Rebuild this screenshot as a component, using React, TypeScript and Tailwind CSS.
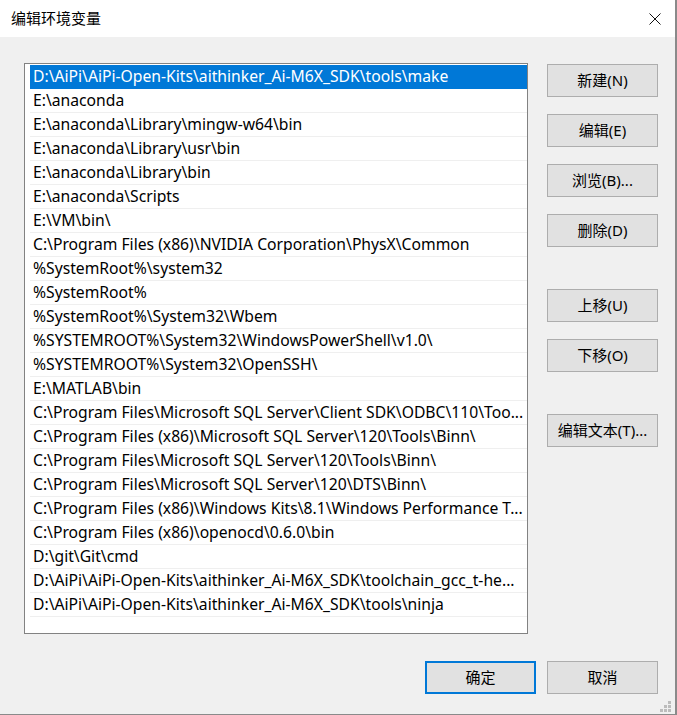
import React from "react";

const paths = [
  "D:\\AiPi\\AiPi-Open-Kits\\aithinker_Ai-M6X_SDK\\tools\\make",
  "E:\\anaconda",
  "E:\\anaconda\\Library\\mingw-w64\\bin",
  "E:\\anaconda\\Library\\usr\\bin",
  "E:\\anaconda\\Library\\bin",
  "E:\\anaconda\\Scripts",
  "E:\\VM\\bin\\",
  "C:\\Program Files (x86)\\NVIDIA Corporation\\PhysX\\Common",
  "%SystemRoot%\\system32",
  "%SystemRoot%",
  "%SystemRoot%\\System32\\Wbem",
  "%SYSTEMROOT%\\System32\\WindowsPowerShell\\v1.0\\",
  "%SYSTEMROOT%\\System32\\OpenSSH\\",
  "E:\\MATLAB\\bin",
  "C:\\Program Files\\Microsoft SQL Server\\Client SDK\\ODBC\\110\\Too...",
  "C:\\Program Files (x86)\\Microsoft SQL Server\\120\\Tools\\Binn\\",
  "C:\\Program Files\\Microsoft SQL Server\\120\\Tools\\Binn\\",
  "C:\\Program Files\\Microsoft SQL Server\\120\\DTS\\Binn\\",
  "C:\\Program Files (x86)\\Windows Kits\\8.1\\Windows Performance T...",
  "C:\\Program Files (x86)\\openocd\\0.6.0\\bin",
  "D:\\git\\Git\\cmd",
  "D:\\AiPi\\AiPi-Open-Kits\\aithinker_Ai-M6X_SDK\\toolchain_gcc_t-he...",
  "D:\\AiPi\\AiPi-Open-Kits\\aithinker_Ai-M6X_SDK\\tools\\ninja",
];

const font = "font-['Noto_Sans','Noto_Sans_CJK_SC',sans-serif]";

const Btn: React.FC<{ label: string; primary?: boolean; className?: string }> = ({
  label,
  primary = false,
  className = "",
}) => (
  <button
    type="button"
    className={`w-[111px] h-[33px] bg-[#e1e1e1] text-[15px] text-black flex items-center justify-center ${
      primary ? "border-2 border-[#0078d7]" : "border border-[#adadad]"
    } ${className}`}
  >
    {label}
  </button>
);

// resize grip dots, bottom right corner
const Grip = () => (
  <svg width="11" height="11" viewBox="0 0 11 11" className="absolute right-[4px] bottom-[2px]">
    <rect x="8" y="0" width="3" height="3" fill="#bcbcbc" />
    <rect x="4" y="4" width="3" height="3" fill="#bcbcbc" />
    <rect x="8" y="4" width="3" height="3" fill="#bcbcbc" />
    <rect x="0" y="8" width="3" height="3" fill="#bcbcbc" />
    <rect x="4" y="8" width="3" height="3" fill="#bcbcbc" />
    <rect x="8" y="8" width="3" height="3" fill="#bcbcbc" />
  </svg>
);

export default function App() {
  return (
    <div className={`relative w-[677px] h-[715px] flex flex-col bg-[#f0f0f0] border-r-2 border-b border-r-[#8a8a8a] border-b-[#8a8a8a] ${font}`}>
      {/* title bar */}
      <div className="h-[37px] bg-white flex items-center justify-between pl-[11px] pr-[14px]">
        <span className="text-[15px] text-black">编辑环境变量</span>
        <svg width="12" height="12" viewBox="0 0 12 12">
          <path d="M0.5 0.5 L11.5 11.5 M11.5 0.5 L0.5 11.5" stroke="#111" strokeWidth="1" />
        </svg>
      </div>

      <div className="flex pl-[24px] pt-[26px]">
        {/* path list */}
        <div className="w-[504px] h-[571px] bg-white border border-[#828282] pt-[1px] pl-[5px]">
          {paths.map((p, i) => (
            <div
              key={i}
              className={`h-[24px] border-b pl-[3px] pt-[1px] flex items-center whitespace-nowrap overflow-hidden text-[15.7px] ${
                i === 0 ? "bg-[#0078d7] border-b-[#0078d7] text-white" : "border-b-[#efefef] text-black"
              }`}
            >
              {p}
            </div>
          ))}
        </div>

        {/* side buttons */}
        <div className="ml-[19px] pt-[1px] flex flex-col">
          <div className="flex flex-col gap-[17px]">
            <Btn label="新建(N)" />
            <Btn label="编辑(E)" />
            <Btn label="浏览(B)..." />
            <Btn label="删除(D)" />
          </div>
          <div className="mt-[42px] flex flex-col gap-[17px]">
            <Btn label="上移(U)" />
            <Btn label="下移(O)" />
          </div>
          <Btn label="编辑文本(T)..." className="mt-[42px]" />
        </div>
      </div>

      <div className="flex justify-end gap-[11px] pr-[17px] mt-[27px]">
        <Btn label="确定" primary />
        <Btn label="取消" />
      </div>

      <Grip />
    </div>
  );
}
